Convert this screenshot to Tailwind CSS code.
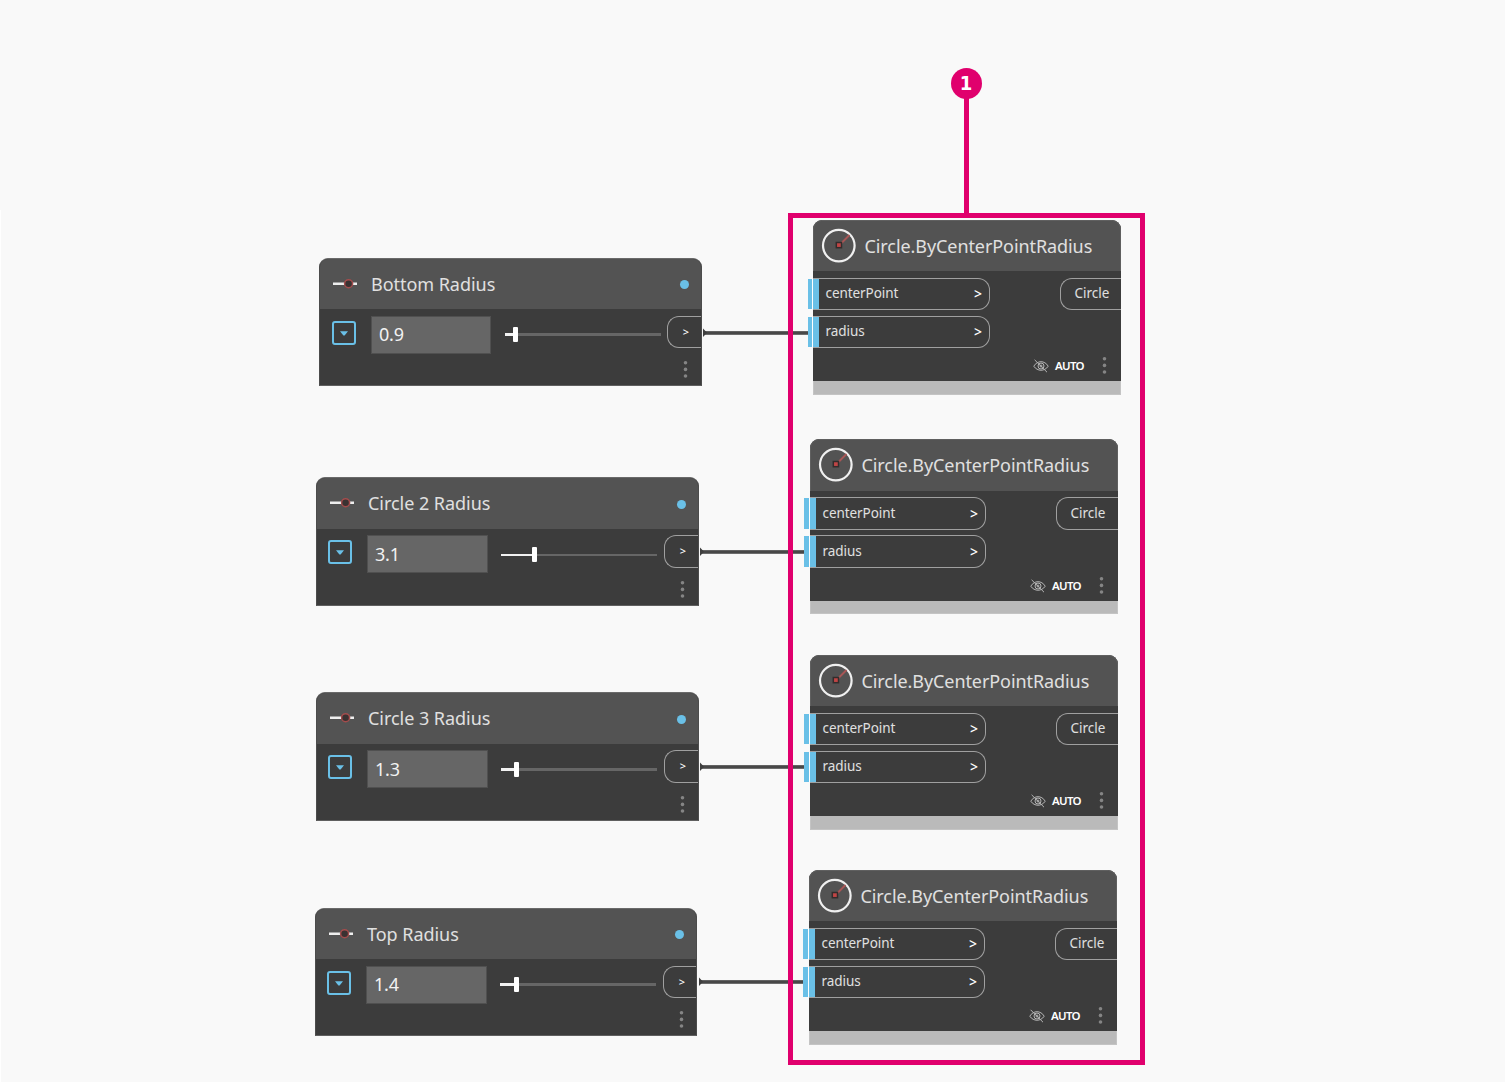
<!DOCTYPE html>
<html lang="en">
<head>
<meta charset="utf-8">
<title>Node graph</title>
<script src="https://cdn.jsdelivr.net/npm/@tailwindcss/browser@4"></script>
</head>
<body class="bg-[#f9f9f9]">
<main id="canvas" class="relative w-[1505px] h-[1082px] overflow-hidden bg-[#f9f9f9] font-['Noto_Sans',sans-serif] text-[#e0e0e0]">
  <div class="absolute left-0 top-[210px] bottom-0 w-px bg-white"></div>
</main>
<script>
const canvas = document.getElementById('canvas');
const add = html => canvas.insertAdjacentHTML('beforeend', html);

const sliders = [
  {x:319, y:258, w:383, h:128, head:51, pad:0,  field:120, top:7, drop:11, port:32, lift:2, title:'Bottom Radius',   value:'0.9', thumb:8,  track:3, wire:703, end:808, wy:331},
  {x:316, y:477, w:383, h:129, head:52, pad:-1, field:121, top:6, drop:12, port:33, lift:0, title:'Circle 2 Radius', value:'3.1', thumb:31, track:2, wire:700, end:804, wy:550},
  {x:316, y:692, w:383, h:129, head:52, pad:-1, field:121, top:6, drop:12, port:33, lift:0, title:'Circle 3 Radius', value:'1.3', thumb:13, track:3, wire:700, end:804, wy:765},
  {x:315, y:908, w:382, h:128, head:51, pad:-1, field:121, top:7, drop:11, port:32, lift:2, title:'Top Radius',      value:'1.4', thumb:14, track:3, wire:699, end:803, wy:980},
];
const circles = [
  {x:813, y:220, h:175, head:51, dark:161, port:32, pw:177, out:61, gap:6, bx:-5, bw:4},
  {x:810, y:439, h:175, head:52, dark:162, port:33, pw:176, out:62, gap:5, bx:-6, bw:5},
  {x:810, y:655, h:175, head:51, dark:161, port:32, pw:176, out:62, gap:6, bx:-6, bw:5},
  {x:809, y:870, h:175, head:51, dark:161, port:32, pw:176, out:62, gap:6, bx:-6, bw:5},
];
const dots = `<svg class="block shrink-0" width="5" height="19" viewBox="0 0 5 19" fill="#858585"><circle cx="2.5" cy="2.7" r="1.8"/><circle cx="2.5" cy="9.4" r="1.8"/><circle cx="2.5" cy="16" r="1.8"/></svg>`;

sliders.forEach(s => {
  add(`<svg class="absolute" style="left:${s.wire}px;top:${s.wy-3}px" width="${s.end-s.wire}" height="10">
    <rect x="1" y="3" width="${s.end-s.wire}" height="4" fill="#777"/><rect x="1" y="3.6" width="${s.end-s.wire}" height="2.6" fill="#484848"/><path d="M0 .5 4 4.8 0 9Z" fill="#3f3f3f"/></svg>
  <section class="absolute flex flex-col overflow-hidden rounded-t-[9px] bg-[#3c3c3c] border border-t-[#6a6a6a] border-x-[#4c4c4c] border-b-[#606060]" style="left:${s.x}px;top:${s.y}px;width:${s.w}px;height:${s.h}px">
    <header class="flex shrink-0 items-center bg-[#535353] pl-3 pr-3 pb-px" style="height:${s.head-1}px">
      <svg class="block shrink-0" width="26" height="12" viewBox="0 0 26 12"><path d="M1 5.7H25" stroke="#eee" stroke-width="2.4"/><circle cx="16.6" cy="5.7" r="4" fill="#3a3232" stroke="#a34c4c" stroke-width="1.5"/></svg>
      <h2 class="ml-[13px] grow text-[18px] leading-6 tracking-[-0.04px] whitespace-nowrap">${s.title}</h2>
      <i class="block size-[9px] rounded-full bg-[#6ac0e7] relative top-px"></i>
    </header>
    <div class="flex items-start" style="padding-left:${12+s.pad}px;padding-top:${s.top}px">
      <div class="mt-[5px] flex size-6 shrink-0 items-center justify-center rounded-[3px] border-2 border-[#6ac0e7]">
        <svg class="block" width="8" height="5" viewBox="0 0 8 5"><path d="M0 .3H8L4.6 4.4H3.4Z" fill="#6ac0e7"/></svg>
      </div>
      <div class="ml-[15px] flex h-[38px] shrink-0 items-center border border-[#505050] bg-[#666] pl-[7px] text-[18px] tracking-[-0.2px] text-[#f2f2f2]" style="width:${s.field}px;padding-bottom:${s.lift}px">${s.value}</div>
      <div class="relative flex h-[15px] w-[156px] shrink-0 items-center" style="margin-top:${s.drop}px;margin-left:${134-s.field}px">
        <div class="w-full bg-[#666]" style="height:${s.track}px"><div class="h-full bg-[#f2f2f2]" style="width:${s.thumb}px"></div></div>
        <i class="absolute top-0 block h-[15px] w-[5px] rounded-[1px] bg-white" style="left:${s.thumb}px"></i>
      </div>
      <div class="flex shrink-0 flex-col items-start" style="margin-left:${s.field-114}px">
        <div class="flex w-[34px] items-center justify-center rounded-l-[12px] border border-r-0 border-[#a0a0a0] pl-[3px] text-[11px] font-medium text-white" style="height:${s.port}px">&gt;</div>
        <div class="ml-4 mt-3">${dots}</div>
      </div>
    </div>
  </section>`);
});

const port = (c, label) => `<div class="flex items-center justify-between rounded-r-[12px] border border-l-0 border-[#a0a0a0] pr-[7px] text-[13.5px] tracking-[-0.07px]" style="width:${c.pw}px;height:${c.port}px">
    <div class="flex h-full items-center"><i class="relative block w-[6px] self-stretch bg-[#6ac0e7]"><b class="absolute inset-y-0 block bg-[#6ac0e7]" style="left:${c.bx}px;width:${c.bw}px"></b><b class="absolute inset-y-0 -left-px block w-px bg-white"></b></i><span class="ml-[6.5px] pb-px">${label}</span></div>
    <span class="pb-px text-[14px] font-medium text-white">&gt;</span></div>`;

circles.forEach(c => {
  add(`<section class="absolute flex w-[308px] flex-col rounded-t-[9px] bg-[#3c3c3c]" style="left:${c.x}px;top:${c.y}px;height:${c.h}px">
    <header class="flex shrink-0 items-center rounded-t-[9px] border border-b-0 border-[#606060] bg-[#535353] pl-[7px] pb-px" style="height:${c.head}px">
      <svg class="block shrink-0" width="36" height="36" viewBox="0 0 36 36"><circle cx="17.8" cy="17.6" r="15.8" fill="none" stroke="#f0f0f0" stroke-width="2.2"/><path d="M18 17.5 28.5 7" stroke="#a85656" stroke-width="2"/><rect x="15.3" y="14.5" width="5.2" height="5.2" fill="#c04545" stroke="#332c2c" stroke-width="1.5"/></svg>
      <h2 class="ml-[7.5px] text-[18px] leading-6 tracking-[-0.08px] whitespace-nowrap">Circle.ByCenterPointRadius</h2>
    </header>
    <div class="flex shrink-0 flex-col" style="height:${c.dark-c.head}px">
      <div class="flex justify-between" style="padding-top:${58-c.head}px">
        <div class="flex flex-col" style="gap:${c.gap}px">${port(c,'centerPoint')}${port(c,'radius')}</div>
        <div class="flex items-center rounded-l-[12px] border border-r-0 border-[#a0a0a0] pb-px pl-[13.5px] text-[13.5px]" style="width:${c.out}px;height:${c.port}px">Circle</div>
      </div>
      <div class="flex items-center justify-end pr-[14px] pt-2">
        <svg class="block" width="16" height="14" viewBox="0 0 16 14" fill="none" stroke="#b5b5b5" stroke-width="1"><path d="M.8 7.2C4.3 1.2 11.7 1.2 15.2 7.2 11.7 12.6 4.3 12.6.8 7.2Z"/><circle cx="8" cy="7" r="3"/><circle cx="8" cy="7" r="1"/><path d="M1.6.8 14 13.2"/></svg>
        <span class="ml-[6px] w-[30px] text-[11.5px] leading-[18px] tracking-[-0.7px] font-semibold text-white">AUTO</span>
        <div class="ml-[17px]">${dots}</div>
      </div>
    </div>
    <footer class="grow border border-t-0 border-[#c4c4c4] bg-[#bababa]"></footer>
  </section>`);
});

add(`<div class="pointer-events-none absolute left-[788px] top-[213px] h-[852px] w-[357px] border-5 border-[#e0006d]"></div>
<div class="absolute left-[951px] top-[68px] flex w-[31px] flex-col items-center">
  <div class="flex size-[31px] items-center justify-center rounded-full bg-[#e0006d] pb-[2px] pr-px font-['DejaVu_Sans'] text-[20px] font-bold leading-none text-white"><span class="scale-x-90">1</span></div>
  <div class="-mt-px h-[117px] w-[5px] bg-[#e0006d]"></div>
</div>`);
</script>
</body>
</html>
